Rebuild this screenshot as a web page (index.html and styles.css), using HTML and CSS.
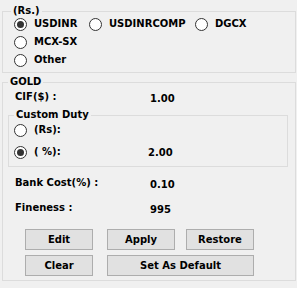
FILE: index.html
```html
<!DOCTYPE html>
<html>
<head>
<meta charset="utf-8">
<link rel="stylesheet" href="styles.css">
</head>
<body>
<div class="group group-rs">
  <span class="legend legend-rs">(Rs.)</span>
  <div class="rs-grid">
    <label class="opt"><span class="radio checked"></span>USDINR</label>
    <label class="opt"><span class="radio"></span>USDINRCOMP</label>
    <label class="opt"><span class="radio"></span>DGCX</label>
    <label class="opt"><span class="radio"></span>MCX-SX</label>
    <span></span><span></span>
    <label class="opt"><span class="radio"></span>Other</label>
  </div>
</div>

<div class="group group-gold">
  <span class="legend legend-gold">GOLD</span>
  <div class="row row-cif">
    <span class="lbl">CIF($) :</span>
    <span class="val">1.00</span>
  </div>
  <div class="group group-duty">
    <span class="legend legend-duty">Custom Duty</span>
    <div class="row duty-row">
      <label class="opt"><span class="radio"></span>(Rs):</label>
      <span class="val"></span>
    </div>
    <div class="row duty-row duty-row2">
      <label class="opt"><span class="radio checked"></span>( %):</label>
      <span class="val">2.00</span>
    </div>
  </div>
  <div class="row row-bank">
    <span class="lbl">Bank Cost(%) :</span>
    <span class="val">0.10</span>
  </div>
  <div class="row row-fine">
    <span class="lbl">Fineness :</span>
    <span class="val">995</span>
  </div>
  <div class="buttons">
    <button class="btn c1">Edit</button>
    <button class="btn c2">Apply</button>
    <button class="btn c3">Restore</button>
    <button class="btn c1">Clear</button>
    <button class="btn c23">Set As Default</button>
  </div>
</div>
</body>
</html>
```
FILE: styles.css
```css
html, body {
  margin: 0;
  padding: 0;
  background: #f0f0f0;
}
body {
  font-family: "DejaVu Sans", sans-serif;
  font-weight: bold;
  font-size: 10px;
  line-height: 14px;
  color: #000;
  width: 297px;
  height: 288px;
  overflow: hidden;
}
.group {
  position: relative;
  border: 1px solid #dcdcdc;
  box-sizing: border-box;
}
.legend {
  position: absolute;
  top: -8px;
  line-height: 14px;
  background: #f0f0f0;
  padding: 0 2px;
}
.legend-rs { left: 8px; }
.legend-gold { left: 5px; }
.legend-duty { left: 5px; }

.group-rs {
  margin: 11px 1px 0 2px;
  height: 62px;
  padding: 3px 0 0 11px;
}
.rs-grid {
  display: grid;
  grid-template-columns: 75px 106px auto;
  grid-auto-rows: 18px;
}
.opt {
  display: flex;
  align-items: center;
  gap: 7px;
  white-space: nowrap;
}
.radio {
  width: 13px;
  height: 13px;
  box-sizing: border-box;
  border: 1px solid #333;
  border-radius: 50%;
  background: #fff;
  display: flex;
  align-items: center;
  justify-content: center;
  flex: none;
}
.radio.checked::after {
  content: "";
  width: 7px;
  height: 7px;
  border-radius: 50%;
  background: #333;
}

.group-gold {
  margin: 9px 1px 0 2px;
  height: 199px;
  padding-top: 7px;
}
.row {
  display: grid;
  grid-template-columns: 135px auto;
  height: 14px;
  padding-left: 12px;
}
.val {
  padding-top: 2px;
}
.group-duty {
  margin: 11px 7px 0 5px;
  height: 52px;
  padding-top: 7px;
}
.duty-row {
  padding-left: 5px;
  grid-template-columns: 134px auto;
}
.duty-row2 {
  margin-top: 7px;
}
.row-bank { margin-top: 9px; }
.row-fine { margin-top: 11px; }

.buttons {
  display: grid;
  grid-template-columns: 68px 14px 68px 11px 68px;
  grid-template-rows: 21px 21px;
  row-gap: 5px;
  margin: 14px 0 0 22px;
}
.btn {
  font: inherit;
  color: #000;
  background: #e1e1e1;
  border: 1px solid #adadad;
  padding: 0;
  margin: 0;
  line-height: 19px;
}
.c1 { grid-column: 1; }
.c2 { grid-column: 3; }
.c3 { grid-column: 5; }
.c23 { grid-column: 3 / 6; }
```
